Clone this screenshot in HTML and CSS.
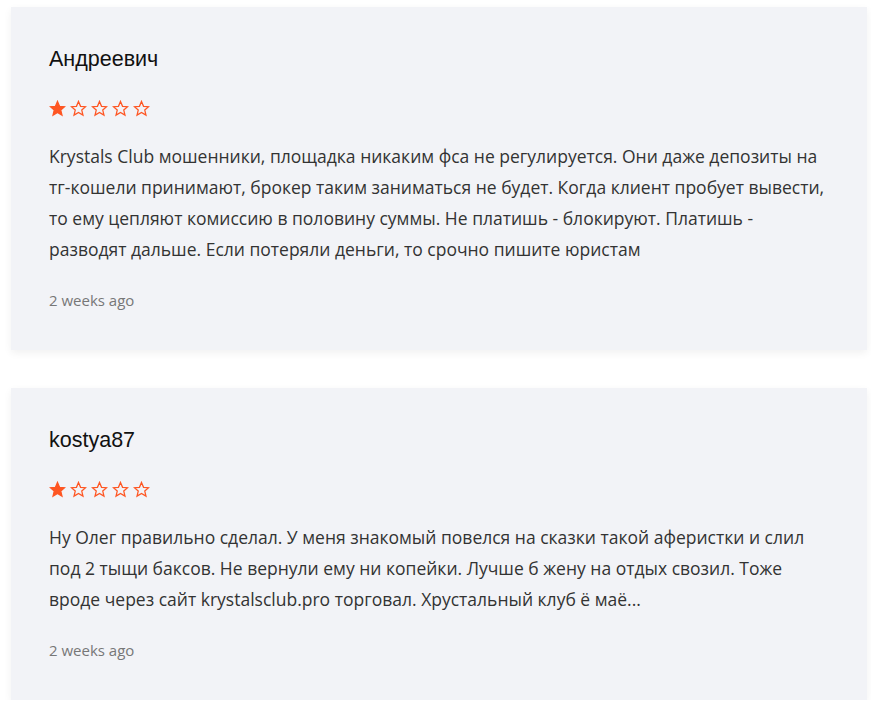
FILE: index.html
```html
<!DOCTYPE html>
<html lang="ru">
  <head>
    <meta charset="UTF-8" />
    <title>Reviews</title>
    <link rel="stylesheet" href="styles.css">
  </head>
  <body>
    <div class="reviews">
      <div class="review">
        <h3 class="review-author">Андреевич</h3>
        <div class="stars">
          <svg class="star filled" viewBox="0 0 24 24"><path d="M12 2l2.9 6.9 7.1.6-5.4 4.7 1.7 7.1L12 17.5l-6.3 3.8 1.7-7.1L2 9.5l7.1-.6z"/></svg>
          <svg class="star" viewBox="0 0 24 24"><path d="M12 2l2.9 6.9 7.1.6-5.4 4.7 1.7 7.1L12 17.5l-6.3 3.8 1.7-7.1L2 9.5l7.1-.6z"/></svg>
          <svg class="star" viewBox="0 0 24 24"><path d="M12 2l2.9 6.9 7.1.6-5.4 4.7 1.7 7.1L12 17.5l-6.3 3.8 1.7-7.1L2 9.5l7.1-.6z"/></svg>
          <svg class="star" viewBox="0 0 24 24"><path d="M12 2l2.9 6.9 7.1.6-5.4 4.7 1.7 7.1L12 17.5l-6.3 3.8 1.7-7.1L2 9.5l7.1-.6z"/></svg>
          <svg class="star" viewBox="0 0 24 24"><path d="M12 2l2.9 6.9 7.1.6-5.4 4.7 1.7 7.1L12 17.5l-6.3 3.8 1.7-7.1L2 9.5l7.1-.6z"/></svg>
        </div>
        <p class="review-text">
          Krystals Club мошенники, площадка никаким фса не регулируется. Они даже депозиты на тг-кошели принимают, брокер таким заниматься не будет. Когда клиент пробует вывести, то ему цепляют комиссию в половину суммы. Не платишь - блокируют. Платишь - разводят дальше. Если потеряли деньги, то срочно пишите юристам
        </p>
        <div class="review-date">2 weeks ago</div>
      </div>

      <div class="review">
        <h3 class="review-author">kostya87</h3>
        <div class="stars">
          <svg class="star filled" viewBox="0 0 24 24"><path d="M12 2l2.9 6.9 7.1.6-5.4 4.7 1.7 7.1L12 17.5l-6.3 3.8 1.7-7.1L2 9.5l7.1-.6z"/></svg>
          <svg class="star" viewBox="0 0 24 24"><path d="M12 2l2.9 6.9 7.1.6-5.4 4.7 1.7 7.1L12 17.5l-6.3 3.8 1.7-7.1L2 9.5l7.1-.6z"/></svg>
          <svg class="star" viewBox="0 0 24 24"><path d="M12 2l2.9 6.9 7.1.6-5.4 4.7 1.7 7.1L12 17.5l-6.3 3.8 1.7-7.1L2 9.5l7.1-.6z"/></svg>
          <svg class="star" viewBox="0 0 24 24"><path d="M12 2l2.9 6.9 7.1.6-5.4 4.7 1.7 7.1L12 17.5l-6.3 3.8 1.7-7.1L2 9.5l7.1-.6z"/></svg>
          <svg class="star" viewBox="0 0 24 24"><path d="M12 2l2.9 6.9 7.1.6-5.4 4.7 1.7 7.1L12 17.5l-6.3 3.8 1.7-7.1L2 9.5l7.1-.6z"/></svg>
        </div>
        <p class="review-text">
          Ну Олег правильно сделал. У меня знакомый повелся на сказки такой аферистки и слил под 2 тыщи баксов. Не вернули ему ни копейки. Лучше б жену на отдых свозил. Тоже вроде через сайт krystalsclub.pro торговал. Хрустальный клуб ё маё...
        </p>
        <div class="review-date">2 weeks ago</div>
      </div>
    </div>
  </body>
</html>
```

FILE: styles.css
```css
* {
  margin: 0;
  padding: 0;
  box-sizing: border-box;
}

body {
  background-color: white;
  font-family: "Open Sans", sans-serif;
}

/* Reviews list */
.reviews {
  display: flex;
  flex-direction: column;
  gap: 38px;
  padding: 7px 4px 0 11px;
}

.review {
  background-color: #f2f3f7;
  padding: 40px 38px 39px;
  box-shadow: 0 3px 8px rgba(0, 0, 0, 0.06);
}

.review-author {
  font-family: "Liberation Sans", Arial, sans-serif;
  font-size: 21.5px;
  font-weight: normal;
  line-height: 24px;
  color: #111;
}

.stars {
  display: flex;
  gap: 4px;
  margin-top: 29px;
}

.star {
  width: 17px;
  height: 17px;
  fill: none;
  stroke: #fe5623;
  stroke-width: 1.8;
  stroke-linejoin: miter;
}

.star.filled {
  fill: #fe5623;
}

.review-text {
  margin-top: 24px;
  font-size: 17.5px;
  line-height: 31px;
  color: #333;
}

.review-date {
  margin-top: 24px;
  font-size: 15px;
  line-height: 22px;
  color: #777;
}
```
